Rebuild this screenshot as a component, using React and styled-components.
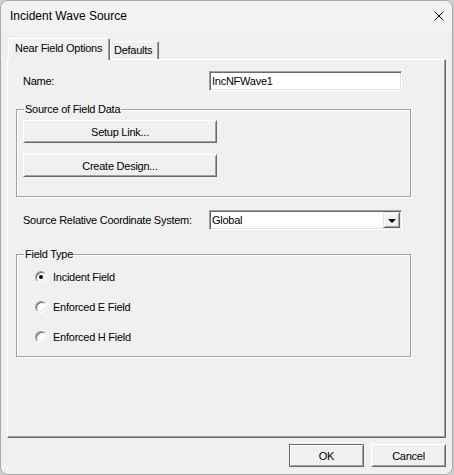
import React from "react";
import styled, { createGlobalStyle } from "styled-components";

const GlobalStyle = createGlobalStyle`
  html, body { margin: 0; padding: 0; background: #cfcfcf; }
  body { font-family: "Liberation Sans", Arial, sans-serif; font-size: 11px; letter-spacing: -0.25px; color: #000; }
  * { box-sizing: border-box; }
`;

const Window = styled.div`
  width: 453px;
  height: 475px;
  border: 1px solid #a9a9a9;
  border-radius: 8px;
  background: #f0f0f0;
  overflow: hidden;
  display: flex;
  flex-direction: column;
`;

const TitleBar = styled.div`
  height: 30px;
  flex: none;
  display: flex;
  align-items: center;
  justify-content: space-between;
  padding: 0 8px 0 9px;
  background: #f3f3f3;
  font-family: "Liberation Sans", Arial, sans-serif;
  font-size: 12px;
  letter-spacing: 0;
  color: #000;
`;

const CloseIcon = styled.svg`
  width: 10px;
  height: 10px;
  display: block;
`;

const Body = styled.div`
  flex: 1;
  display: flex;
  flex-direction: column;
  padding: 7px 6px 0 6px;
`;

const TabStrip = styled.div`
  height: 22px;
  margin-bottom: -1px;
  padding-left: 1px;
  display: flex;
  position: relative;
  z-index: 1;
`;

const Tab = styled.div`
  height: ${(p) => (p.$active ? "22px" : "18px")};
  margin-top: ${(p) => (p.$active ? "0" : "3px")};
  width: ${(p) => p.$w}px;
  padding-left: ${(p) => (p.$active ? "6px" : "3px")};
  padding-top: ${(p) => (p.$active ? "2px" : "0")};
  line-height: ${(p) => (p.$active ? "14px" : "16px")};
  background: #f0f0f0;
  border-top: 1px solid #fff;
  border-left: 1px solid #fff;
  border-right: 1px solid #696969;
  box-shadow: inset -1px 0 0 #a0a0a0;
  border-radius: 2px 2px 0 0;
  white-space: nowrap;
  overflow: hidden;
`;

const Panel = styled.div`
  width: 439px;
  height: 379px;
  border-top: 1px solid #fff;
  border-left: 1px solid #fff;
  border-right: 1px solid #696969;
  border-bottom: 1px solid #696969;
  box-shadow: inset -1px -1px 0 #a0a0a0;
  padding-left: 8px;
  display: flex;
  flex-direction: column;
`;

const FieldRow = styled.div`
  margin-top: ${(p) => p.$mt}px;
  height: 20px;
  padding-left: 7px;
  display: grid;
  grid-template-columns: 186px 193px;
  align-items: center;
`;

const FieldLabel = styled.span`
  white-space: nowrap;
`;

const sunken = `
  border-top: 1px solid #a0a0a0;
  border-left: 1px solid #a0a0a0;
  border-right: 1px solid #fff;
  border-bottom: 1px solid #fff;
  box-shadow: inset 1px 1px 0 #696969, inset -1px -1px 0 #e3e3e3;
  background: #fff;
`;

const TextInput = styled.input`
  ${sunken}
  height: 20px;
  width: 193px;
  padding: 0 0 0 2px;
  font-family: "Liberation Sans", Arial, sans-serif;
  font-size: 11px;
  letter-spacing: -0.25px;
  color: #000;
  outline: none;
`;

const Combo = styled.div`
  ${sunken}
  height: 20px;
  width: 193px;
  display: flex;
  align-items: center;
  justify-content: space-between;
  padding: 0 1px 0 2px;
`;

const ComboButton = styled.div`
  width: 17px;
  height: 16px;
  background: #f0f0f0;
  border-top: 1px solid #e3e3e3;
  border-left: 1px solid #e3e3e3;
  border-right: 1px solid #696969;
  border-bottom: 1px solid #696969;
  box-shadow: inset 1px 1px 0 #fff, inset -1px -1px 0 #a0a0a0;
  display: flex;
  align-items: center;
  justify-content: center;
`;

const Arrow = styled.span`
  width: 0;
  height: 0;
  border-left: 4px solid transparent;
  border-right: 4px solid transparent;
  border-top: 4px solid #000;
  margin-top: 1px;
`;

const GroupBox = styled.div`
  position: relative;
  margin-top: ${(p) => p.$mt}px;
  width: 395px;
  height: ${(p) => p.$h}px;
  border: 1px solid #a0a0a0;
  box-shadow: inset 1px 1px 0 #fff, 1px 1px 0 #fff;
  display: flex;
  flex-direction: column;
`;

const GroupLegend = styled.span`
  position: absolute;
  top: -8px;
  left: 7px;
  padding: 0 1px;
  line-height: 14px;
  background: #f0f0f0;
  white-space: nowrap;
`;

const PushButton = styled.div`
  width: ${(p) => p.$w}px;
  height: 23px;
  margin-top: ${(p) => p.$mt || 0}px;
  margin-left: ${(p) => p.$ml || 0}px;
  flex: none;
  display: flex;
  align-items: center;
  justify-content: center;
  background: #f0f0f0;
  border-top: 1px solid ${(p) => (p.$default ? "#696969" : "#fff")};
  border-left: 1px solid ${(p) => (p.$default ? "#696969" : "#fff")};
  border-right: 1px solid #696969;
  border-bottom: 1px solid #696969;
  box-shadow: ${(p) =>
    p.$default
      ? "inset 1px 1px 0 #fff, inset -1px -1px 0 #a0a0a0"
      : "inset 1px 1px 0 #f0f0f0, inset -1px -1px 0 #a0a0a0"};
  white-space: nowrap;
`;

const RadioRow = styled.div`
  height: 16px;
  margin-top: 14px;
  padding-left: 18px;
  display: flex;
  align-items: center;
  gap: 6px;
`;

const RadioCircle = styled.span`
  width: 12px;
  height: 12px;
  border-radius: 50%;
  background: #fff;
  border: 1px solid;
  border-color: #a0a0a0 #fff #fff #a0a0a0;
  box-shadow: inset 1px 1px 0 #696969, inset -1px -1px 0 #e3e3e3;
  display: flex;
  align-items: center;
  justify-content: center;
  flex: none;
`;

const RadioDot = styled.span`
  width: 4px;
  height: 4px;
  border-radius: 50%;
  background: #000;
`;

const Footer = styled.div`
  margin-top: 6px;
  display: flex;
  justify-content: flex-end;
  gap: 7px;
`;

const radios = [
  { label: "Incident Field", checked: true },
  { label: "Enforced E Field", checked: false },
  { label: "Enforced H Field", checked: false },
];

export default function App() {
  return (
    <>
      <GlobalStyle />
      <Window>
        <TitleBar>
          <span>Incident Wave Source</span>
          <CloseIcon viewBox="0 0 10 10">
            <path d="M0.5 0.5 L9.5 9.5 M9.5 0.5 L0.5 9.5" stroke="#000" strokeWidth="1" fill="none" />
          </CloseIcon>
        </TitleBar>
        <Body>
          <TabStrip>
            <Tab $active $w={102}>Near Field Options</Tab>
            <Tab $w={49}>Defaults</Tab>
          </TabStrip>
          <Panel>
            <FieldRow $mt={11}>
              <FieldLabel>Name:</FieldLabel>
              <TextInput readOnly value="IncNFWave1" />
            </FieldRow>
            <GroupBox $mt={18} $h={88}>
              <GroupLegend>Source of Field Data</GroupLegend>
              <PushButton $w={194} $mt={10} $ml={6}>Setup Link...</PushButton>
              <PushButton $w={194} $mt={11} $ml={6}>Create Design...</PushButton>
            </GroupBox>
            <FieldRow $mt={13}>
              <FieldLabel>Source Relative Coordinate System:</FieldLabel>
              <Combo>
                <span>Global</span>
                <ComboButton>
                  <Arrow />
                </ComboButton>
              </Combo>
            </FieldRow>
            <GroupBox $mt={24} $h={103}>
              <GroupLegend>Field Type</GroupLegend>
              {radios.map((r) => (
                <RadioRow key={r.label}>
                  <RadioCircle>{r.checked && <RadioDot />}</RadioCircle>
                  <span>{r.label}</span>
                </RadioRow>
              ))}
            </GroupBox>
          </Panel>
          <Footer>
            <PushButton $w={75} $default>OK</PushButton>
            <PushButton $w={75}>Cancel</PushButton>
          </Footer>
        </Body>
      </Window>
    </>
  );
}
